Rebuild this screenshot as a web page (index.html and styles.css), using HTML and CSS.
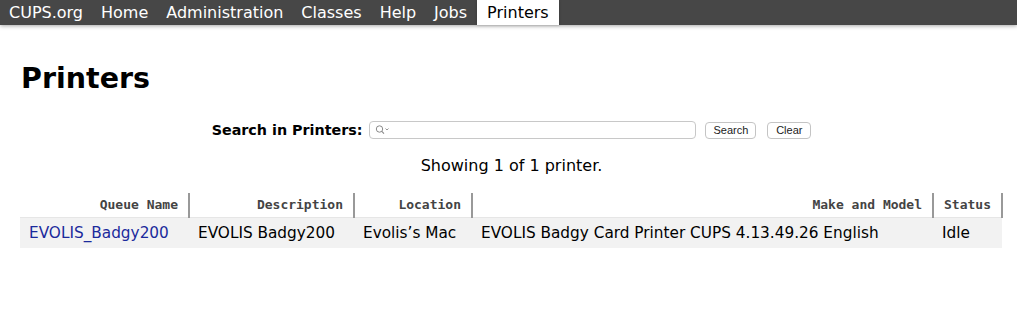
FILE: index.html
```html
<!DOCTYPE html>
<html lang="en">
<head>
<meta charset="UTF-8" />
<title>Printers - CUPS</title>
<link rel="stylesheet" href="styles.css">
</head>
<body>
<nav class="header">
  <a class="nav-item" href="#">CUPS.org</a>
  <a class="nav-item" href="#">Home</a>
  <a class="nav-item" href="#">Administration</a>
  <a class="nav-item" href="#">Classes</a>
  <a class="nav-item" href="#">Help</a>
  <a class="nav-item" href="#">Jobs</a>
  <a class="nav-item active" href="#">Printers</a>
</nav>
<div class="body">
  <h1 class="title">Printers</h1>
  <form class="search" onsubmit="return false">
    <b class="search-label">Search in Printers:</b>
    <label class="search-field">
      <svg class="search-icon" width="16" height="10" viewBox="0 0 16 10">
        <circle cx="4.5" cy="4" r="3.2" fill="none" stroke="#8a8a8a" stroke-width="1"/>
        <line x1="6.8" y1="6.3" x2="9" y2="8.6" stroke="#8a8a8a" stroke-width="1.1"/>
        <polyline points="10.5,3.5 12,5 13.5,3.5" fill="none" stroke="#8a8a8a" stroke-width="0.9"/>
      </svg>
      <input class="search-input" type="search" name="QUERY">
    </label>
    <button class="btn" type="submit">Search</button>
    <button class="btn" type="button">Clear</button>
  </form>
  <p class="count">Showing 1 of 1 printer.</p>
  <table class="list">
    <thead>
      <tr>
        <th class="col-queue">Queue Name</th>
        <th class="col-desc">Description</th>
        <th class="col-loc">Location</th>
        <th class="col-model">Make and Model</th>
        <th class="col-status">Status</th>
      </tr>
    </thead>
    <tbody>
      <tr>
        <td><a class="queue-link" href="#">EVOLIS_Badgy200</a></td>
        <td>EVOLIS Badgy200</td>
        <td>Evolis’s Mac</td>
        <td>EVOLIS Badgy Card Printer CUPS 4.13.49.26 English</td>
        <td>Idle</td>
      </tr>
    </tbody>
  </table>
</div>
</body>
</html>
```
FILE: styles.css
```css
body { margin: 0; background: white; color: black; font-family: "DejaVu Sans", "Noto Sans", sans-serif; font-size: 16px; }
.header { display: flex; height: 25px; background: #474747; box-shadow: 0 1px 4px rgba(0,0,0,0.35); }
.nav-item { color: white; text-decoration: none; padding: 0 9px 0 9px; line-height: 25px; font-size: 16px; }
.nav-item.active { background: white; color: black; margin-left: 1px; padding: 0 10px; box-shadow: 0 0 3px rgba(0,0,0,0.2); }
.body { padding: 0 14px 0 20px; }
.title { margin: 37px 0 0 1px; font-size: 28.5px; line-height: 34px; font-weight: bold; }
.search { display: flex; justify-content: center; align-items: center; margin: 25px 0 0; }
.search-label { font-size: 14.3px; margin-right: 7px; }
.search-field { display: flex; align-items: center; width: 325px; height: 16px; border: 1px solid #c8c8c8; border-radius: 4px; background: white; }
.search-icon { margin-left: 5px; }
.search-input { flex: 1; border: none; outline: none; font-size: 11px; padding: 0; background: transparent; }
.btn { margin-left: 9px; height: 17px; min-width: 44px; padding: 0 7px; border: 1px solid #c4c4c4; border-radius: 4px; background: white; font-family: "Liberation Sans", Arial, sans-serif; font-size: 11px; line-height: 15px; color: #222; }
.btn + .btn { margin-left: 11px; }
.count { text-align: center; margin: 15px 0 0; line-height: 24px; }
.list { width: 100%; border-collapse: collapse; margin-top: 15px; }
.list th { text-align: right; font-family: "DejaVu Sans Mono", "Liberation Mono", monospace; font-size: 13px; font-weight: bold; color: #444; padding: 3px 10px 4px 10px; border-right: 2px solid #999; line-height: 17px; }
.list td { background: #f2f2f2; padding: 0 9px; height: 30px; border-top: 1px solid #e6e6e6; font-size: 15.3px; }
.col-queue { width: 148px; }
.col-desc { width: 143px; }
.col-loc { width: 96px; }
.col-status { width: 45px; }
.queue-link { color: #1b2a9c; text-decoration: none; }
```
